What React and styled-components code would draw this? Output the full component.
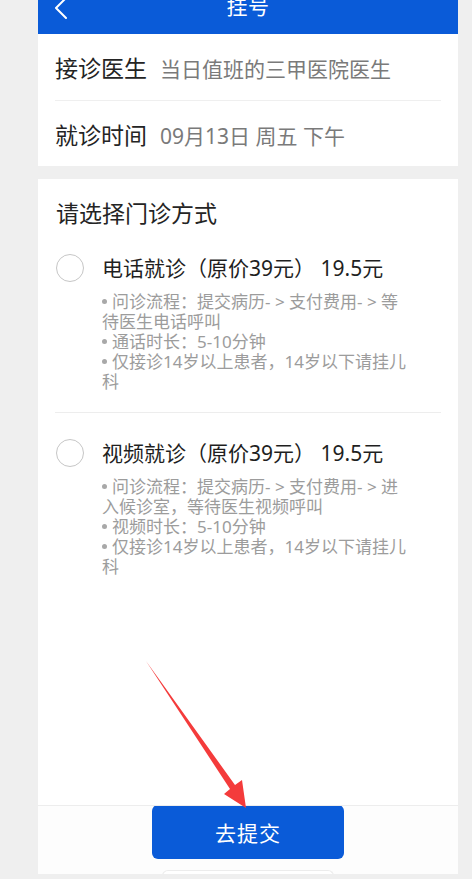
import React, { useState } from "react";
import styled, { createGlobalStyle } from "styled-components";

const GlobalStyle = createGlobalStyle`
  html, body {
    margin: 0;
    padding: 0;
    background: #efefef;
  }
  body {
    font-family: "Noto Sans", "Noto Sans CJK SC", sans-serif;
    -webkit-font-smoothing: antialiased;
  }
`;

const options = [
  {
    id: "phone",
    title: "电话就诊（原价39元） 19.5元",
    lines: [
      "问诊流程：提交病历- > 支付费用- > 等待医生电话呼叫",
      "通话时长：5-10分钟",
      "仅接诊14岁以上患者，14岁以下请挂儿科",
    ],
  },
  {
    id: "video",
    title: "视频就诊（原价39元） 19.5元",
    lines: [
      "问诊流程：提交病历- > 支付费用- > 进入候诊室，等待医生视频呼叫",
      "视频时长：5-10分钟",
      "仅接诊14岁以上患者，14岁以下请挂儿科",
    ],
  },
];

function App() {
  const [picked, setPicked] = useState(null);

  return (
    <Screen>
      <GlobalStyle />
      <Column>
        <Header>
          <BackButton aria-label="返回">
            <svg width="14" height="22" viewBox="0 0 14 22" fill="none">
              <path
                d="M12 1 L2 11 L12 21"
                stroke="#fff"
                strokeWidth="2"
                strokeLinecap="round"
                strokeLinejoin="round"
              />
            </svg>
          </BackButton>
          <HeaderTitle>挂号</HeaderTitle>
          <span />
        </Header>

        <InfoCard>
          <InfoRow>
            <Label>接诊医生</Label>
            <Value>当日值班的三甲医院医生</Value>
          </InfoRow>
          <InfoRow $divided>
            <Label>就诊时间</Label>
            <Value>09月13日 周五 下午</Value>
          </InfoRow>
        </InfoCard>

        <ChoiceCard>
          <CardTitle>请选择门诊方式</CardTitle>
          {options.map((opt, i) => (
            <Option
              key={opt.id}
              $last={i === options.length - 1}
              onClick={() => setPicked(opt.id)}
            >
              <OptionHead>
                <Radio $on={picked === opt.id} />
                <OptionTitle>{opt.title}</OptionTitle>
              </OptionHead>
              <Desc>
                {opt.lines.map((line) => (
                  <DescLine key={line}>
                    <Dot />
                    {line}
                  </DescLine>
                ))}
              </Desc>
            </Option>
          ))}
        </ChoiceCard>

        <Footer>
          <SubmitButton>去提交</SubmitButton>
          <GhostBar />
        </Footer>
      </Column>

      {/* red pointer drawn over the page */}
      <Arrow width="472" height="879" viewBox="0 0 472 879">
        <polygon
          points="146,661 235,785 242,780 246,808 224,794 230,789"
          fill="#f43b3b"
        />
      </Arrow>
    </Screen>
  );
}

const Screen = styled.div`
  position: relative;
  width: 472px;
  height: 879px;
  overflow: hidden;
  background: #efefef;
`;

const Column = styled.div`
  margin-left: 38px;
  width: 420px;
  height: 874px;
  display: flex;
  flex-direction: column;
  overflow: hidden;
`;

const Header = styled.div`
  flex: none;
  margin-top: -22px;
  height: 56px;
  background: #0a5bd8;
  display: grid;
  grid-template-columns: 1fr auto 1fr;
  align-items: center;
  padding: 0 16px;
  color: #fff;
`;

const BackButton = styled.button`
  justify-self: start;
  background: none;
  border: 0;
  padding: 0;
  display: flex;
  margin-top: 4px;
`;

const HeaderTitle = styled.div`
  font-size: 21px;
  line-height: 28px;
  letter-spacing: 0.5px;
`;

const InfoCard = styled.div`
  flex: none;
  background: #fff;
  padding: 0 17px;
`;

const InfoRow = styled.div`
  box-sizing: border-box;
  height: 66px;
  padding-top: 3px;
  display: flex;
  align-items: baseline;
  align-content: center;
  flex-wrap: wrap;
  border-top: ${(p) => (p.$divided ? "1px solid #efefef" : "none")};
  & > * {
    line-height: 30px;
  }
`;

const Label = styled.span`
  font-size: 23px;
  color: #242424;
  margin-right: 13px;
`;

const Value = styled.span`
  font-size: 21px;
  color: #7a7a7a;
`;

const ChoiceCard = styled.div`
  flex: 1;
  margin-top: 13px;
  background: #fff;
  padding: 19px 17px 0;
`;

const CardTitle = styled.div`
  font-size: 23px;
  line-height: 30px;
  color: #242424;
  padding-left: 1px;
`;

const Option = styled.div`
  padding: 26px 0 20px;
  border-bottom: ${(p) => (p.$last ? "none" : "1px solid #ededed")};
  cursor: pointer;
`;

const OptionHead = styled.div`
  display: flex;
  align-items: center;
  gap: 18px;
`;

const Radio = styled.span`
  flex: none;
  box-sizing: border-box;
  width: 28px;
  height: 28px;
  margin-left: 1px;
  border-radius: 50%;
  border: 1.5px solid #c6c6c6;
  background: ${(p) => (p.$on ? "#0a5bd8" : "#fff")};
`;

const OptionTitle = styled.div`
  font-size: 21px;
  line-height: 28px;
  color: #1f1f1f;
`;

const Desc = styled.div`
  margin-top: 10px;
  padding-left: 47px;
  padding-right: 26px;
`;

const DescLine = styled.div`
  font-size: 17px;
  line-height: 20px;
  color: #9c9c9c;
`;

const Dot = styled.span`
  display: inline-block;
  width: 5px;
  height: 5px;
  border-radius: 50%;
  background: #a8a8a8;
  vertical-align: middle;
  margin: -3px 5px 0 0;
`;

const Footer = styled.div`
  flex: none;
  height: 68px;
  border-top: 1px solid #ededed;
  background: #fdfdfd;
  display: flex;
  flex-direction: column;
  align-items: center;
  overflow: hidden;
  & > * {
    flex: none;
  }
`;

const SubmitButton = styled.button`
  width: 192px;
  height: 54px;
  margin-top: -1px;
  border: 0;
  border-radius: 6px;
  background: #0a5bd8;
  color: #fff;
  font-family: inherit;
  font-size: 21px;
  letter-spacing: 1px;
`;

const GhostBar = styled.div`
  width: 170px;
  height: 12px;
  margin-top: 11px;
  border: 1px solid #ececec;
  border-bottom: 0;
  border-radius: 6px 6px 0 0;
  background: #fff;
`;

const Arrow = styled.svg`
  position: absolute;
  left: 0;
  top: 0;
  pointer-events: none;
`;

export default App;
